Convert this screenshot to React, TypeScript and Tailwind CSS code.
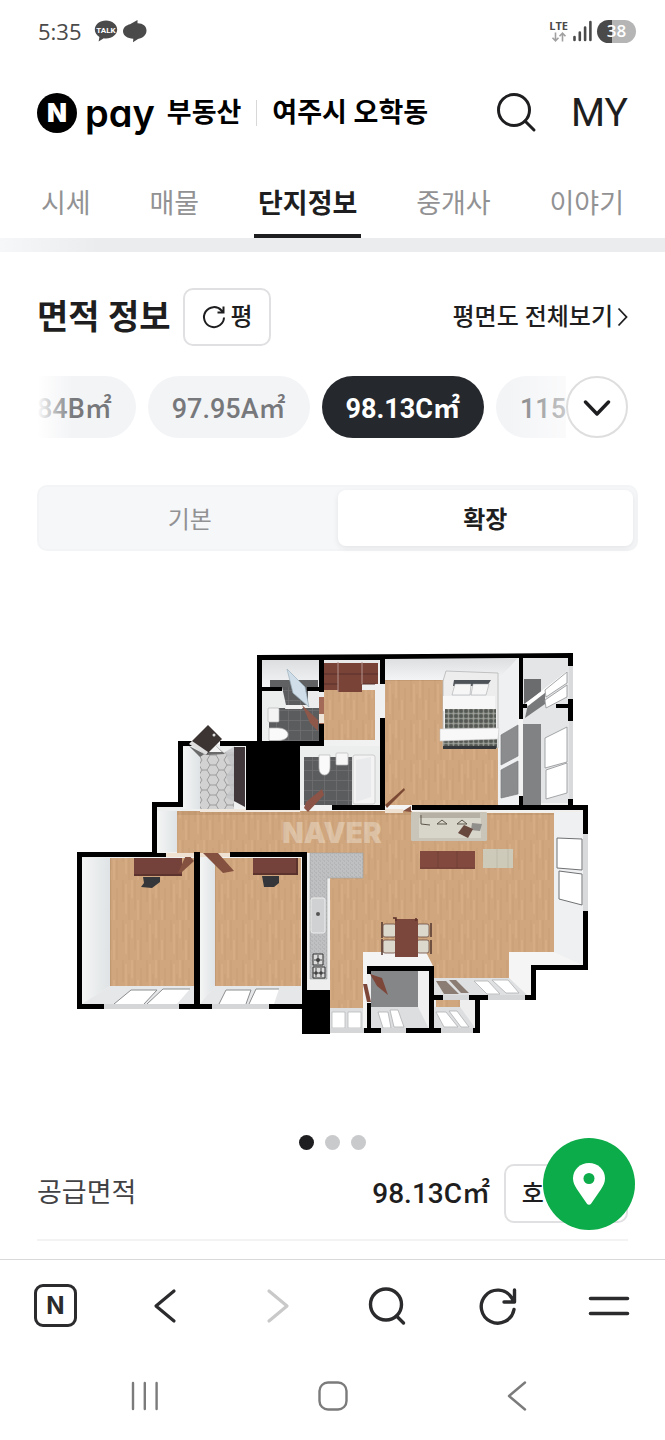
import { useState } from "react";
import { clsx } from "clsx";

interface TabItem {
  href: string;
  label: string;
}

const tabs: TabItem[] = [
  { href: "#price", label: "시세" },
  { href: "#sale", label: "매물" },
  { href: "#complex", label: "단지정보" },
  { href: "#agent", label: "중개사" },
  { href: "#talk", label: "이야기" },
];

const areas = ["84B㎡", "97.95A㎡", "98.13C㎡", "115"];

function StatusBar() {
  return (
    <div className="flex h-[62px] items-center justify-between pl-[38px] pr-[29px] text-[#4a4a4a]">
      <div className="flex items-center gap-1">
        <span className="mr-2 font-['Open_Sans',sans-serif] text-[22px] leading-6">5:35</span>
        <svg width="24" height="24" viewBox="0 0 24 24" aria-hidden="true">
          <path
            d="M12 1.500C5.800 1.500.8 5.400.8 10.600c0 3.200 1.900 5.800 4.600 7.400L4.600 22.500l5.200-3.200c.7.100 1.400.2 2.200.2 6.200 0 11.200-3.900 11.200-8.900S18.200 1.500 12 1.500z"
            fill="#4a4a4a"
          />
          <text x="12" y="13.500" textAnchor="middle" fontSize="8" fontWeight="700" fill="#fff" fontFamily="Roboto, sans-serif">
            TALK
          </text>
        </svg>
        <svg width="26" height="24" viewBox="0 0 26 24" aria-hidden="true">
          <path
            d="M15.500 1v3.200C20.500 4 24.500 7 24.500 11.500c0 5-4 7.500-8.500 8.500l-5 3.300.3-3.600C5.500 19.500 1 16.800 1 12.300 1 8.300 4.500 6 8 5.200z"
            fill="#4a4a4a"
          />
        </svg>
      </div>
      <div className="flex items-center gap-[5px]">
        <div className="flex flex-col items-center">
          <span className="font-['Open_Sans',sans-serif] text-[11px] font-bold leading-3">LTE</span>
          <svg width="16" height="10" viewBox="0 0 16 10" fill="none" stroke="#a0a0a0" strokeWidth="1.600" aria-hidden="true">
            <path d="M4.500 0.500v8M1.500 5.800l3 3 3-3M11.500 9.500v-8M8.500 4.200l3-3 3 3" />
          </svg>
        </div>
        <svg width="19" height="22" viewBox="0 0 19 22" stroke="#4a4a4a" strokeWidth="2.600" strokeLinecap="round" aria-hidden="true">
          <path d="M1.500 17v3M6.800 12.500V20M12.100 7.500V20M17.400 2v18" />
        </svg>
        <span className="flex h-[23px] w-[39px] items-center justify-center rounded-full bg-linear-to-r from-[#4a4a4a] from-38% to-[#b5b5b5] to-38% font-['Open_Sans',sans-serif] text-[17px] font-semibold leading-5 text-white">
          38
        </span>
      </div>
    </div>
  );
}

function Header() {
  return (
    <header className="flex h-[100px] items-center justify-between px-[37px] pt-[2px]">
      <div className="flex items-center text-black">
        <a href="#home" className="flex items-center">
          <span className="flex size-10 items-center justify-center rounded-full bg-black font-['Inter',sans-serif] text-[26px] font-black leading-none text-white">
            N
          </span>
          <span className="ml-2 font-['Inter',sans-serif] text-[38px] font-semibold leading-10 [font-feature-settings:'cv11']">
            pay
          </span>
          <span className="ml-3 text-[27px] font-bold">부동산</span>
        </a>
        <span className="mx-[15px] h-[26px] w-px bg-[#d8d8d8]" />
        <span className="text-[27px] font-bold">여주시 오학동</span>
      </div>
      <div className="flex items-center gap-[34px]">
        <button type="button" aria-label="검색">
          <svg width="40" height="40" viewBox="0 0 40 40" fill="none" stroke="#1e1e20" strokeWidth="3" strokeLinecap="round">
            <circle cx="17" cy="17" r="15.500" />
            <path d="M28 28l9 9" />
          </svg>
        </button>
        <a href="#my" className="text-[39px] leading-10 text-[#1e1e20]">
          MY
        </a>
      </div>
    </header>
  );
}

function PlanDefs() {
  return (
    <defs>
      <pattern id="wood" width="24" height="40" patternUnits="userSpaceOnUse">
        <rect width="24" height="40" fill="#cfa67d" />
        <path d="M3 0v22M9 14v26M15 0v30M21 8v32" stroke="#c39a71" strokeWidth="1.500" opacity=".45" />
        <path d="M6 4v30M12 0v18M18 20v20" stroke="#d8b189" strokeWidth="2" opacity=".6" />
      </pattern>
      <pattern id="slate" width="12" height="10" patternUnits="userSpaceOnUse">
        <rect width="12" height="10" fill="#5b5c5e" />
        <path d="M0 .5h12M.5 0v10" stroke="#6e6f71" strokeWidth=".8" />
      </pattern>
      <pattern id="hex" width="17" height="20" patternUnits="userSpaceOnUse">
        <rect width="17" height="20" fill="#d2d2d2" />
        <path
          d="M0 10h3M3 10l3-5h6l3 5-3 5H6zM15 10h2M6 5L3 0M12 5l3-5M6 15l-3 5M12 15l3 5"
          fill="none"
          stroke="#8e8e8e"
          strokeWidth=".8"
        />
      </pattern>
      <pattern id="plaid" width="5" height="5" patternUnits="userSpaceOnUse">
        <rect width="5" height="5" fill="#74786f" />
        <path d="M0 1h5M1 0v5" stroke="#4a4d4a" strokeWidth="1" />
        <path d="M0 3.500h5M3.500 0v5" stroke="#a9aca8" strokeWidth=".6" />
      </pattern>
      <pattern id="granite" width="4" height="4" patternUnits="userSpaceOnUse">
        <rect width="4" height="4" fill="#bfc0c2" />
        <path d="M0 1h1M2 3h1M3 0h1" stroke="#a9aaac" />
      </pattern>
      <linearGradient id="shade" x1="0" x2="1" y1="0" y2="1">
        <stop offset="0" stopColor="#e2e4e5" />
        <stop offset=".5" stopColor="#f5f5f5" />
        <stop offset="1" stopColor="#e4e5e6" />
      </linearGradient>
      <linearGradient id="wallLeft" x1="0" x2="1" y1="0" y2="0">
        <stop offset="0" stopColor="#f4f5f5" />
        <stop offset="1" stopColor="#dfe3e5" />
      </linearGradient>
      <linearGradient id="wallTop" x1="0" x2="0" y1="0" y2="1">
        <stop offset="0" stopColor="#dcdee0" />
        <stop offset="1" stopColor="#f3f4f5" />
      </linearGradient>
    </defs>
  );
}

function FloorPlan() {
  return (
    <svg viewBox="37 640 591 400" className="mt-[89px] block w-full" role="img" aria-label="98.13C㎡ 확장 평면도">
      <PlanDefs />

      {/* Plaster behind every room */}
      <path
        d="M260 657H571V807H586V968H534V998H478V1031H304V1007H79V855H155V805H181V744H260z"
        fill="url(#shade)"
      />

      {/* Floors */}
      <g fill="url(#wood)">
        <path d="M110 858H194V986H110zM215 858H301V986H215z" />
        <path d="M177 811H554V952H509V978H434V966H363V1008H330V978H327V853H177z" />
        <path d="M324 690H375V740H324zM385 680H498V805H385z" />
        <path d="M436 999H460V1008H436z" />
      </g>
      <path d="M177 811H554V815H177z" fill="#7a5130" opacity=".12" />
      <path d="M157 811H177V852H157z" fill="url(#wallLeft)" />
      <path d="M110 858v128M215 858v128M385 680h56" stroke="#a98461" strokeWidth="1" fill="none" opacity=".6" />

      {/* Upper left bathroom */}
      <path d="M262 660H319V687H262z" fill="url(#wallTop)" />
      <path d="M270 680H318V687H270z" fill="#606163" />
      <path d="M282 687H308V705H286z" fill="url(#slate)" />
      <path d="M269 708H319V741H269z" fill="url(#slate)" />
      <path d="M280 690L286 708H262V692z" fill="#eceded" />
      <path d="M286 705H304L302 709H285z" fill="#f2f2f2" />
      <path d="M287 669L305 687L309 707L293 693z" fill="#cfdee8" stroke="#9cb0bd" strokeWidth=".7" />
      <path d="M309 692H318V708H310z" fill="#ececec" />
      <rect x="268" y="708" width="11" height="14" rx="1" fill="#f4f4f4" stroke="#b5b5b5" strokeWidth=".7" />
      <path d="M269 728h9c6 0 10 3 10 6.500s-4 6-10 6h-9z" fill="#fafafa" stroke="#b5b5b5" strokeWidth=".7" />
      <path d="M302 705L318 720V731L310 723z" fill="#8d574a" />

      {/* Dressing room */}
      <path d="M324 660H379V664H324z" fill="#e9e9e9" />
      <path d="M324 663H378V684H362V692H338V690H324z" fill="#7a4338" />
      <path d="M324 674h54M324 684h14M362 684h14" stroke="#55302a" fill="none" />
      <path d="M338 662v30M362 662v22" stroke="#b5958c" strokeWidth="1" fill="none" />
      <path d="M375 684H380V740H375z" fill="#f0f0f0" />

      {/* Entrance */}
      <path d="M183 747H200V809H183z" fill="url(#wallLeft)" />
      <path d="M200 752H234V809H200z" fill="url(#hex)" />
      <path d="M225 752l10-6v56l-10-5 6-7-5-14 6-8z" fill="#c3c4c5" opacity=".8" />
      <path d="M234 747H245V807L234 801z" fill="#40383a" />
      <path d="M200 809H300V812H200z" fill="#f0e8de" />

      {/* Main bathroom */}
      <path d="M300 746H380V805H300z" fill="#eceded" />
      <path d="M304 757H352V805H304z" fill="url(#slate)" />
      <rect x="353" y="755" width="22" height="49" rx="2" fill="#f3f3f3" stroke="#c4c4c4" strokeWidth=".8" />
      <path d="M356 760l15-3v40l-15 5z" fill="#e9eaeb" />
      <path d="M319 755h11v12c0 5-2 8-5.500 8s-5.500-3-5.500-8z" fill="#fafafa" stroke="#b9b9b9" strokeWidth=".7" />
      <rect x="336" y="753" width="12" height="12" rx="1" fill="#f6f6f6" stroke="#b9b9b9" strokeWidth=".7" />
      <path d="M304 808L306 802L322 789L324 795L308 812z" fill="#8c5446" />

      {/* Master bedroom */}
      <path d="M385 658H518L498 680H385z" fill="url(#wallTop)" />
      <path d="M498 680L518 658V805H498z" fill="#eff0f1" />
      <path d="M446 671L498 673V748L443 747V681z" fill="#ededed" stroke="#b5b5b5" strokeWidth=".8" />
      <path d="M454 680H491L487 686H453z" fill="#4c5257" />
      <path d="M455 684H471L470 695H452zM473 684H489L486 695H471z" fill="#f6f6f6" stroke="#9a9da0" strokeWidth=".5" />
      <path d="M443 696H495V711H443z" fill="#f7f7f7" />
      <path d="M445 709H496V730H445z" fill="url(#plaid)" />
      <path d="M443 739H497V748H443z" fill="url(#plaid)" />
      <path d="M443 746H496V749H443z" fill="#34383a" />
      <path d="M440 729L499 728L498 739L440 741z" fill="#f8f8f8" stroke="#ccc" strokeWidth=".6" />
      <path d="M501 735L518 725V756L501 765zM501 770L518 761V794L501 798z" fill="#8a8c8e" stroke="#7a7c7e" strokeWidth=".7" />
      <path d="M385 805L404 788L405 790L387 808z" fill="#7c4a34" />

      {/* Balcony */}
      <path d="M523 658H570V803H523z" fill="#e3e5e6" />
      <path d="M524 679H541V692L524 704z" fill="#6a6c6e" />
      <path d="M525 718L528 704L545 691V704z" fill="#77797b" />
      <path d="M523 724H541V805H523z" fill="#808284" />
      <path d="M526 703L567 671V676L528 706z" fill="#fff" />
      <path
        d="M545 690L567 672V683L546 697zM545 700L567 685V697L546 708zM545 738L567 727V762L545 768zM546 770L567 763V793L546 799z"
        fill="#fff"
        stroke="#9a9c9e"
        strokeWidth=".9"
      />
      <path d="M569 666H573V704H569zM569 721H573V799H569zM583 834H588V911H583z" fill="#d8dadb" />

      {/* Living room */}
      <path d="M412 811H583V813H412z" fill="#f2efea" />
      <path d="M554 812H583V965L554 952z" fill="#eef0f1" />
      <path d="M557 838L582 839V870L557 868zM559 871L582 874V905L559 899z" fill="#fff" stroke="#6f7173" />
      <rect x="411" y="812" width="76" height="29" rx="1" fill="#c9c5b8" />
      <path d="M420 813H480V818H420z" fill="#b5b0a3" />
      <path d="M419 818H481V838H419z" fill="#d8d5ca" />
      <path d="M421 815v9l9 1M437 824l5-4 5 4zM457 824l5-4 5 4z" fill="none" stroke="#5c564a" strokeWidth="1" />
      <path d="M472 823L482 824L480 831L471 830z" fill="#918f8c" />
      <path d="M464 825L473 829L468 838L458 833z" fill="#68473c" />
      <rect x="420" y="851" width="55" height="18" fill="#824a3f" />
      <path d="M420 868h55M438 851v17M457 851v17" stroke="#6d3c33" strokeWidth=".8" />
      <path d="M483 849H513V868H483z" fill="#cdcaba" />
      <path d="M497 849v19M508 849v19" stroke="#bdbaa9" />

      {/* Kitchen */}
      <path d="M307 853H330V990H307z" fill="#eeeeee" />
      <path d="M310 853H363V878H327V979H310z" fill="url(#granite)" stroke="#a0a1a2" strokeWidth=".6" />
      <rect x="311" y="898" width="14" height="35" rx="2" fill="#d0d1d2" stroke="#ececec" />
      <circle cx="318" cy="914" r="2" fill="#555" />
      <path d="M313 954H323V965H313zM313 967H325V978H313z" fill="#dcdcdc" stroke="#303030" strokeWidth="1" />
      <path d="M318 955v9M314 960h8M316 968v9M321 968v9M313 973h12" stroke="#303030" strokeWidth=".9" />
      <circle cx="318" cy="960" r="2" fill="#444" />
      <circle cx="316" cy="973" r="1.700" fill="#444" />
      <circle cx="321" cy="973" r="1.700" fill="#444" />

      {/* Utility room and lower windows */}
      <path d="M363 952H426L433 966H367V1030H363z" fill="#f4f4f4" />
      <path d="M371 971H418V1007H371z" fill="#848688" />
      <path d="M418 971H429V1029L418 1007z" fill="#f0f0f0" />
      <path d="M371 1007H418L429 1029H371z" fill="#dcdedf" />
      <path d="M370 974L382 978L388 995L377 986z" fill="#7c4639" />
      <path d="M363 984H367L371 1002H367z" fill="#7c4639" />
      <path d="M509 952H554L583 965H532V995H527L509 978z" fill="#f5f5f5" />
      <path d="M434 978H509L527 995H434z" fill="#dfe0e1" />
      <path d="M436 981H446L459 994H444zM449 980H456L469 993H461z" fill="#8b7d74" />
      <path d="M474 981H488L500 994H487zM492 980H508L519 993H506z" fill="#fff" stroke="#aeb0b1" strokeWidth=".8" />
      <path d="M460 999H475V1028L460 1007z" fill="#eee" />
      <path d="M434 1007H460L475 1028H434z" fill="#dcdedf" />
      <path d="M436 1012H446L458 1027H444zM449 1011H457L469 1027H461z" fill="#fff" stroke="#aeb0b1" strokeWidth=".8" />
      <path d="M378 1012H388L391 1028H383zM390 1010H398L404 1027H394z" fill="#fff" stroke="#aeb0b1" strokeWidth=".8" />
      <path d="M330 1008H363V1028H330z" fill="#dcdedf" />
      <path d="M332 1012H345V1028H332zM348 1012H361V1028H348z" fill="#fff" stroke="#b7b9ba" strokeWidth=".8" />

      {/* Dining set */}
      <path d="M382 922v16M382 939v16M431 923v14M431 940v14" stroke="#51342c" strokeWidth="1.500" />
      <g fill="#dcd8cb" stroke="#6b4a40" strokeWidth=".8">
        <rect x="383" y="924" width="13" height="13" rx="2" />
        <rect x="383" y="940" width="13" height="13" rx="2" />
        <rect x="417" y="924" width="12" height="13" rx="2" />
        <rect x="417" y="940" width="12" height="13" rx="2" />
      </g>
      <rect x="395" y="919" width="23" height="38" fill="#7b463b" />
      <path d="M393 918h3v3M416 918v3" stroke="#5a3028" strokeWidth="1.500" fill="none" />

      {/* Small bedrooms */}
      <path d="M82 858L110 858V986L82 1004z" fill="url(#wallLeft)" />
      <path d="M200 858L215 858V986L200 1004z" fill="url(#wallLeft)" />
      <path d="M110 986H194V1004H82zM215 986H301V1004H200z" fill="#e6e7e8" />
      <path d="M131 990L157 990L144 1004H114zM163 989L190 989L177 1004H147z" fill="#fff" />
      <path d="M226 990L251 990L246 1004H219zM256 989L279 989L274 1004H249z" fill="#fff" />
      <path
        d="M114 1004L131 990H157L144 1004M147 1004L163 989H190M219 1004L226 990H251L246 1004M249 1004L256 989H279"
        fill="none"
        stroke="#8b8d8e"
      />
      <path d="M134 858H182V876H134zM253 858H298V875H253z" fill="#74423a" />
      <path d="M134 875h48M253 874h45M297 858v17" stroke="#55302a" strokeWidth="1.500" />
      <path d="M143 877H160V882L152 888L141 887L144 883zM262 876H279V883L274 887H264z" fill="#35363a" />
      <path d="M178 873L187 853L194 861L182 872z" fill="#84503f" />

      {/* Structural walls */}
      <g fill="#000">
        <path d="M257 655L573 653V666H568V658L523 658V719H519V658L385 659V684H380V660H324V692H319V660H262V687H282V691H262V741H257z" />
        <path d="M307 687H319V691H307zM319 724H324V741H385V718H380V741H324V746H300V810H246V746H220V741H319z" />
        <path d="M380 718H385V810H332V805H380zM178 741H192V746H183V807H157V853H166V857H82V1004H104V1009H77V852H152V802H178z" />
        <path d="M194 852H200V1004H212V1009H179V1004H194zM230 852H307V990H330V1034H302V1009H269V1004H302V857H230z" />
        <path d="M412 805H519V796H523V805H568V799H573V805H588V834H583V810H412zM556 704H568V699H573V721H568V708H556z" />
        <path d="M583 911H588V970H536V1000H525V995H531V965H583zM367 966H434V995H443V1000H434V1028H441V1033H406V1028H429V971H371V974H367z" />
        <path d="M367 1003H371V1028H381V1033H364V1028H367zM469 995H488V1000H480V1033H473V1028H475V1000H469zM523 704H527V708H523z" />
      </g>
      <path
        d="M104 1004H179V1009H104zM212 1004H269V1009H212zM330 1028H364V1033H330zM381 1028H406V1033H381zM441 1028H473V1033H441zM443 995H469V1000H443zM488 995H525V1000H488z"
        fill="#d5d6d7"
      />
      <path d="M385 809H403V813H385zM166 853H194V857H166zM200 853H230V857H200z" fill="#f0e2d3" />
      <path d="M403 811L411 806V812zM203 853H218L234 871L223 873z" fill="#84503f" />
      <path d="M319 697H324V724H319z" fill="#a46a58" />
      <path d="M319 714H324V723H319z" fill="#efe4d8" />

      {/* Front door */}
      <path d="M189 746L206 755L225 754L216 746L200 757z" fill="#6a6a6a" />
      <path d="M208 748L214 744L222 752H206z" fill="#f4f4f4" />
      <path d="M190 743L208 725L222 739L206 755z" fill="#3b3433" />
      <path d="M189 744L192 741L208 752L206 755z" fill="#dedede" />
      <circle cx="214" cy="735" r="1.500" fill="#ddd" />

      <text
        x="332"
        y="843"
        textAnchor="middle"
        fontSize="28"
        fontWeight="900"
        fontFamily="Inter, sans-serif"
        fill="#fff"
        opacity=".3"
      >
        NAVER
      </text>
    </svg>
  );
}

function BottomBar() {
  return (
    <footer className="sticky bottom-0 mt-auto bg-white">
      <button
        type="button"
        aria-label="지도"
        className="absolute -top-[121px] right-[30px] flex size-[92px] items-center justify-center rounded-full bg-[#0bac49]"
      >
        <svg width="34" height="44" viewBox="0 0 34 44">
          <path
            d="M17 1C8 1 1 7.800 1 16.200c0 4 1.600 7.400 4 11L14.800 41.500c1.100 1.600 3.300 1.600 4.400 0L29 27.200c2.400-3.600 4-7 4-11C33 7.800 26 1 17 1z"
            fill="#fff"
          />
          <circle cx="17" cy="16.500" r="5.500" fill="#0bac49" />
        </svg>
      </button>

      {/* Browser toolbar */}
      <nav className="flex h-[92px] items-center justify-between border-t border-[#d9d9d9] pl-[34px] pr-[35px] text-[#2b2b2d]">
        <a
          href="#naver"
          className="flex size-[43px] items-center justify-center rounded-[9px] border-[3px] border-[#2b2b2d] font-['Inter',sans-serif] text-[24px] font-bold leading-none"
        >
          N
        </a>
        <button type="button" aria-label="뒤로">
          <svg width="44" height="44" viewBox="0 0 44 44" fill="none" stroke="currentColor" strokeWidth="3.200" strokeLinecap="round" strokeLinejoin="round">
            <path d="M30 7L12 22 30 37" />
          </svg>
        </button>
        <button type="button" aria-label="앞으로" disabled className="text-[#c9c9c9]">
          <svg width="44" height="44" viewBox="0 0 44 44" fill="none" stroke="currentColor" strokeWidth="3.200" strokeLinecap="round" strokeLinejoin="round">
            <path d="M14 7L32 22 14 37" />
          </svg>
        </button>
        <button type="button" aria-label="검색">
          <svg width="44" height="44" viewBox="0 0 44 44" fill="none" stroke="currentColor" strokeWidth="3.400" strokeLinecap="round">
            <circle cx="20" cy="20.500" r="15.500" />
            <path d="M30.500 32l7 7" />
          </svg>
        </button>
        <button type="button" aria-label="새로고침">
          <svg width="44" height="44" viewBox="0 0 44 44" fill="none" stroke="currentColor" strokeWidth="3.400" strokeLinecap="round" strokeLinejoin="round">
            <path d="M37 25.500A16.500 16.500 0 1 1 34.500 13.500L37 17.500M37.500 6v12H27" />
          </svg>
        </button>
        <button type="button" aria-label="메뉴">
          <svg width="42" height="44" viewBox="0 0 42 44" fill="none" stroke="currentColor" strokeWidth="3.600" strokeLinecap="round">
            <path d="M2.500 14.500h37M2.500 29.500h37" />
          </svg>
        </button>
      </nav>

      {/* System navigation */}
      <div className="flex h-[89px] items-center justify-between px-[130px] text-[#7b7b7b]">
        <button type="button" aria-label="최근 앱">
          <svg width="30" height="30" viewBox="0 0 30 30" stroke="currentColor" strokeWidth="2.400" strokeLinecap="round">
            <path d="M3 2v26M14.800 2v26M26.600 2v26" />
          </svg>
        </button>
        <button type="button" aria-label="홈">
          <svg width="30" height="30" viewBox="0 0 30 30" fill="none" stroke="currentColor" strokeWidth="2.400">
            <rect x="1.500" y="1.500" width="27" height="27" rx="8.500" />
          </svg>
        </button>
        <button type="button" aria-label="이전">
          <svg width="30" height="30" viewBox="0 0 30 30" fill="none" stroke="currentColor" strokeWidth="2.400" strokeLinecap="round" strokeLinejoin="round">
            <path d="M20 1.500L4 15l16 13.500" />
          </svg>
        </button>
      </div>
    </footer>
  );
}

export default function App() {
  const [tab, setTab] = useState("#complex");
  const [area, setArea] = useState("98.13C㎡");
  const [plan, setPlan] = useState("확장");

  return (
    <div className="flex min-h-screen flex-col bg-white font-['Roboto','Noto_Sans_CJK_KR',sans-serif] text-[#1e1e20]">
      <StatusBar />
      <Header />

      <nav className="flex h-[76px] items-stretch justify-between px-[37px]">
        {tabs.map((item) => {
          const active = item.href === tab;
          return (
            <a
              key={item.href}
              href={item.href}
              onClick={() => setTab(item.href)}
              className={clsx(
                "flex items-center border-b-4 px-1 pt-3 text-[27px]",
                active ? "border-[#1e1e20] font-bold text-[#1e1e20]" : "border-transparent text-[#929294]"
              )}
            >
              {item.label}
            </a>
          );
        })}
      </nav>
      <div className="h-[14px] bg-linear-to-r from-[#f6f7f8] via-[#ebecee] via-15% to-[#ebecee]" />

      <main className="px-[37px] pb-[18px] pt-9">
        <div className="flex items-center justify-between">
          <div className="flex items-center gap-3">
            <h1 className="text-[34px] font-bold leading-10">면적 정보</h1>
            <button
              type="button"
              className="flex h-[58px] items-center gap-1 rounded-[10px] border-2 border-[#e0e0e2] px-4 text-[24px] font-medium"
            >
              <svg width="26" height="26" viewBox="0 0 26 26" fill="none" stroke="currentColor" strokeWidth="2">
                <path d="M23 13.500A10 10 0 1 1 20.500 6.500L22 8.500M22.500 2.500v6h-6" />
              </svg>
              평
            </button>
          </div>
          <a href="#all" className="flex items-center gap-1 text-[24px] font-medium">
            평면도 전체보기
            <svg width="11" height="20" viewBox="0 0 11 20" fill="none" stroke="currentColor" strokeWidth="1.800">
              <path d="M1.500 1.500L9.500 10l-8 8.500" />
            </svg>
          </a>
        </div>

        {/* Area chips */}
        <div className="mt-[30px] flex">
          <div className="relative flex min-w-0 flex-1 overflow-hidden">
            <div className="-ml-6 flex gap-3">
              {areas.map((item) => (
                <button
                  key={item}
                  type="button"
                  onClick={() => setArea(item)}
                  className={clsx(
                    "h-[62px] min-w-[122px] shrink-0 rounded-full px-6 pt-1 text-left text-[27px]",
                    item === area ? "bg-[#25282d] font-bold text-white" : "bg-[#f3f4f6] font-medium text-[#77787b]"
                  )}
                >
                  {item}
                </button>
              ))}
            </div>
            <span className="pointer-events-none absolute inset-y-0 left-0 w-9 bg-linear-to-r from-white to-white/0" />
            <span className="pointer-events-none absolute inset-y-0 right-0 w-[60px] bg-linear-to-l from-white/60 to-white/0" />
          </div>
          <button
            type="button"
            aria-label="면적 더보기"
            className="flex size-[62px] shrink-0 items-center justify-center rounded-full border-2 border-[#dedede] bg-white"
          >
            <svg width="28" height="18" viewBox="0 0 28 18" fill="none" stroke="currentColor" strokeWidth="3.400" strokeLinecap="round" strokeLinejoin="round">
              <path d="M2.500 4L14 16 25.500 4" />
            </svg>
          </button>
        </div>

        <div className="-mr-[10px] mt-[47px] flex h-[66px] rounded-[10px] border-2 border-[#f3f4f5] bg-[#f6f7f9] p-[3px]">
          {["기본", "확장"].map((item) => (
            <button
              key={item}
              type="button"
              onClick={() => setPlan(item)}
              className={clsx(
                "flex-1 rounded-lg pt-1 text-[24px]",
                item === plan ? "bg-white font-bold shadow-[0_2px_6px_rgba(0,0,0,0.08)]" : "text-[#929294]"
              )}
            >
              {item}
            </button>
          ))}
        </div>

        <FloorPlan />

        <div className="mt-[95px] flex justify-center gap-[11px]">
          <span className="size-[15px] rounded-full bg-[#1e1e20]" />
          <span className="size-[15px] rounded-full bg-[#c9cacc]" />
          <span className="size-[15px] rounded-full bg-[#c9cacc]" />
        </div>

        <dl className="mt-[14px] flex items-center border-b-2 border-[#f3f3f4] pb-4">
          <dt className="flex-1 text-[27px] text-[#424245]">공급면적</dt>
          <dd className="flex items-center gap-[14px] text-[28px] font-medium">
            98.13C㎡
            <button
              type="button"
              className="flex h-[59px] w-[124px] items-center justify-center whitespace-nowrap rounded-[10px] border-2 border-[#e0e0e2] text-[24px]"
            >
              호실정보
            </button>
          </dd>
        </dl>
      </main>

      <BottomBar />
    </div>
  );
}
